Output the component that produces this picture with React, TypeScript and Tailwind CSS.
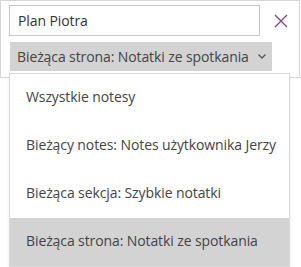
import React from 'react';

const items = [
  'Wszystkie notesy',
  'Bieżący notes: Notes użytkownika Jerzy',
  'Bieżąca sekcja: Szybkie notatki',
  'Bieżąca strona: Notatki ze spotkania',
];

const App: React.FC = () => {
  const selected = 3;
  return (
    <div
      className="relative w-[301px] h-[267px] bg-white overflow-hidden text-[#444444]"
      style={{ fontFamily: '"Open Sans", "Noto Sans", sans-serif' }}
    >
      {/* search panel */}
      <div className="w-[300px] h-[78px] border border-[#d6d6d6] pt-[4px] pl-[8px]">
        <div className="flex items-center">
          <div className="w-[251px] h-[31px] border border-[#c6c6c6] flex items-center pl-[8px] pb-[1px] text-[14px] tracking-[-0.1px] text-[#333333]">
            Plan Piotra
          </div>
          <button className="ml-[13px] w-[15px] h-[15px] flex items-center justify-center">
            <svg width="14" height="14" viewBox="0 0 14 14">
              <path d="M1 1 L13 13 M13 1 L1 13" stroke="#8a3f86" strokeWidth="1.3" />
            </svg>
          </button>
        </div>
        <div className="mt-[6px] ml-[1px] w-[262px] h-[29px] bg-[#d3d3d3] flex items-center pl-[7px] pr-[6px] text-[14px] tracking-[-0.1px]">
          <span className="flex-1 whitespace-nowrap pb-[1px]">Bieżąca strona: Notatki ze spotkania</span>
          <svg width="8" height="5" viewBox="0 0 8 5">
            <path d="M0.5 0.5 L4 4 L7.5 0.5" stroke="#555555" strokeWidth="1.3" fill="none" />
          </svg>
        </div>
      </div>

      {/* dropdown menu */}
      <div className="absolute left-[9px] top-[73px] w-[281px] border border-[#dadada] bg-white shadow-[0_2px_4px_rgba(0,0,0,0.08)]">
        {items.map((item, i) => (
          <div
            key={item}
            className={`h-[48px] flex items-center pl-[16px] pb-[3px] text-[14px] tracking-[-0.1px] whitespace-nowrap ${
              i === selected ? 'bg-[#d3d3d3]' : 'bg-white'
            }`}
          >
            {item}
          </div>
        ))}
      </div>
    </div>
  );
};

export default App;
